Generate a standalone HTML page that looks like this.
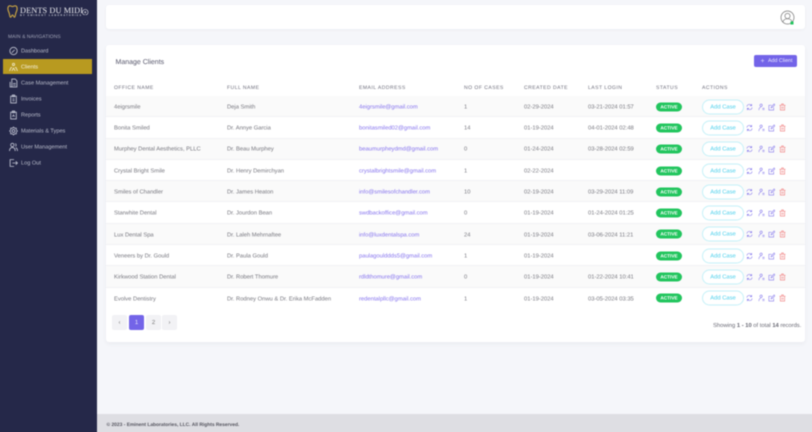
<!DOCTYPE html>
<html><head><meta charset="utf-8">
<style>
*{box-sizing:border-box;margin:0;padding:0}
html{background:#f5f6fa}
html,body{width:812px;height:432px;overflow:hidden;font-family:"Liberation Sans",sans-serif;color:#6a6a78;text-rendering:geometricPrecision}
#w{position:absolute;left:0;top:0;width:812px;height:432px;overflow:hidden;background:#f5f6fa}
#f{position:absolute;left:0;top:0;width:812px;height:432px;filter:blur(.4px)}
.a{position:absolute;white-space:nowrap}
#side{left:-3px;top:-3px;width:100px;height:440px;background:#252849}
.nav{position:absolute;left:21px;font-size:5.6px;line-height:1;color:#b9bccb;white-space:nowrap;transform:translateY(calc(-50% + 1.2px))}
.ni{position:absolute;left:9px;width:9px;height:9px;transform:translateY(-50%);fill:none;stroke:#c0c3d2;stroke-width:1.5}
#hdr{left:106px;top:5px;width:699px;height:24px;background:#fff;border-radius:3px;box-shadow:0 1px 3px rgba(30,30,60,.04)}
#card{left:106px;top:45px;width:699px;height:297px;background:#fff;border-radius:3px;box-shadow:0 2px 5px rgba(30,30,60,.05)}
.th{position:absolute;top:84.700px;line-height:6px;font-size:5.1px;letter-spacing:.45px;color:#70707e;white-space:nowrap}
.r{position:absolute;left:106px;width:699px;height:21.3px;border-bottom:1px solid #f1f1f4}
.r.o{background:#fafafa}
.c{position:absolute;font-size:5.8px;color:#77777f;white-space:nowrap;line-height:1;transform:translateY(calc(-50% + 1.2px))}
.m{color:#8674ee}
.st{position:absolute;left:656px;width:26px;height:9px;border-radius:5px;background:#22c55e;color:#fff;font-size:4.7px;font-weight:bold;line-height:9px;text-align:center;transform:translateY(-50%)}
.ac{position:absolute;left:702px;width:42px;height:15px;border-radius:8px;border:1px solid #c5f1f8;background:#fff;color:#4ed0ec;font-size:5.8px;line-height:14.500px;text-align:center;transform:translateY(-50%)}
.ic{position:absolute;width:7px;height:8px;transform:translateY(-50%);fill:none;stroke-width:1.3}
.pg{position:absolute;top:315px;width:15px;height:15px;border-radius:2px;background:#f2f2f5;color:#777;font-size:6px;line-height:16.500px;text-align:center}
</style></head><body><div id="w"><div id="f">
<div class="a" id="side"></div>
<svg class="a" style="left:7px;top:5px" width="11" height="13" viewBox="0 0 14 17" fill="none" stroke="#c9a443" stroke-width="1.5"><path d="M3.5 1C1.500 1 1 3 1 5c0 3 1.500 4 2 7 .3 2 .6 4 1.500 4S6 13 7 13s1.600 3 2.500 3 1.200-2 1.500-4c.5-3 2-4 2-7 0-2-.5-4-2.500-4C9 1 8.500 2 7 2S5 1 3.500 1z"/></svg>
<div class="a" style="left:20px;top:5.800px;font:8.300px/10px 'Liberation Serif',serif;letter-spacing:.1px;color:#ececf0">DENTS DU MIDI</div>
<div class="a" style="left:20px;top:14px;font:bold 2.500px/3px 'Liberation Sans',sans-serif;letter-spacing:1.150px;color:#c5c7d2">BY EMINENT LABORATORIES</div>
<svg class="a" style="left:82px;top:8.500px" width="6.500" height="6.500" viewBox="0 0 7 7" fill="none" stroke="#d5d5dd" stroke-width=".7"><circle cx="3.500" cy="3.500" r="3"/><circle cx="3.500" cy="3.500" r=".7"/></svg>
<div class="a" style="left:8px;top:35px;font-size:4.900px;line-height:5px;color:#a2a5b8;letter-spacing:.1px">MAIN &amp; NAVIGATIONS</div>
<div class="a" style="left:3px;top:59px;width:89px;height:15px;background:#b89a20"></div>
<svg class="ni" style="top:50.500px" viewBox="0 0 16 16"><circle cx="8" cy="8" r="6.500"/><path d="M5 11l5-5"/></svg>
<div class="nav" style="top:50.500px">Dashboard</div>
<svg class="ni" style="top:66.500px;stroke:#f0e8c5" viewBox="0 0 16 16"><circle cx="8" cy="3.500" r="2"/><path d="M1 15l2.500-6h2M15 15l-2.500-6h-2M5 15l3-5 3 5"/></svg>
<div class="nav" style="top:66.500px;color:#f5f1dc">Clients</div>
<svg class="ni" style="top:82.500px" viewBox="0 0 16 16"><path d="M5 1h6l3 3v11H5zM2 6v9h3M7 9h5M7 12h5"/></svg>
<div class="nav" style="top:82.500px">Case Management</div>
<svg class="ni" style="top:98.500px" viewBox="0 0 16 16"><path d="M3 3h10v12H3zM6 1h4v3H6zM6 8h4M6 11h4"/></svg>
<div class="nav" style="top:98.500px">Invoices</div>
<svg class="ni" style="top:114.500px" viewBox="0 0 16 16"><path d="M3 3h10v12H3zM6 1h4v3H6zM6 11l2-3 2 3"/></svg>
<div class="nav" style="top:114.500px">Reports</div>
<svg class="ni" style="top:130.500px" viewBox="0 0 16 16"><path d="M8 1l2 2h3v3l2 2-2 2v3h-3l-2 2-2-2H3v-3L1 8l2-2V3h3z"/><circle cx="8" cy="8" r="2.500"/></svg>
<div class="nav" style="top:130.500px">Materials &amp; Types</div>
<svg class="ni" style="top:146.500px" viewBox="0 0 16 16"><circle cx="6" cy="4.500" r="3"/><path d="M1 15c0-4 2-6 5-6s5 2 5 6M11 2c2 .5 2.500 4 .5 5M12 9.500c2 .5 3 2.500 3 5.500"/></svg>
<div class="nav" style="top:146.500px">User Management</div>
<svg class="ni" style="top:162.500px" viewBox="0 0 16 16"><path d="M9 2H2v12h7M6 8h9M12 5l3 3-3 3"/></svg>
<div class="nav" style="top:162.500px">Log Out</div>

<div class="a" id="hdr"></div>
<svg class="a" style="left:779.500px;top:9.500px" width="15" height="15" viewBox="0 0 15 15" fill="none" stroke="#777" stroke-width=".7"><circle cx="7.500" cy="7.500" r="6.500"/><circle cx="7.500" cy="6" r="2.600"/><path d="M2.800 12c.7-2.300 2.500-3.200 4.700-3.200s4 .9 4.700 3.200"/><rect x="10.500" y="11.500" width="3" height="3" fill="#22c55e" stroke="none"/></svg>

<div class="a" id="card"></div>
<div class="a" style="left:115.500px;top:58.500px;font-size:7px;line-height:8px;color:#55556a">Manage Clients</div>
<div class="a" style="left:754px;top:55px;width:43px;height:12px;border-radius:2px;background:#7364e8;color:#e8e5ff;font-size:5.300px;line-height:13.500px;padding-left:14px">Add Client</div>
<div class="a" style="left:760.500px;top:59px;color:#dcd8ff;font-size:7px;line-height:5px">+</div>

<div class="th" style="left:114px">OFFICE NAME</div>
<div class="th" style="left:227px">FULL NAME</div>
<div class="th" style="left:359px">EMAIL ADDRESS</div>
<div class="th" style="left:464px">NO OF CASES</div>
<div class="th" style="left:524px">CREATED DATE</div>
<div class="th" style="left:588px">LAST LOGIN</div>
<div class="th" style="left:656px">STATUS</div>
<div class="th" style="left:702px">ACTIONS</div>

<div class="r o" style="top:96px"></div><div class="r" style="top:117.300px"></div><div class="r o" style="top:138.600px"></div><div class="r" style="top:159.900px"></div><div class="r o" style="top:181.200px"></div><div class="r" style="top:202.500px"></div><div class="r o" style="top:223.800px"></div><div class="r" style="top:245.100px"></div><div class="r o" style="top:266.400px"></div><div class="r" style="top:287.700px;border-bottom:0"></div>

<div class="c" style="left:114px;top:106.800px">4eigrsmile</div><div class="c" style="left:227px;top:106.800px">Deja Smith</div><div class="c m" style="left:359px;top:106.800px">4eigrsmile@gmail.com</div><div class="c" style="left:464px;top:106.800px">1</div><div class="c" style="left:524px;top:106.800px">02-29-2024</div><div class="c" style="left:588px;top:106.800px">03-21-2024 01:57</div>
<div class="c" style="left:114px;top:128.100px">Bonita Smiled</div><div class="c" style="left:227px;top:128.100px">Dr. Annye Garcia</div><div class="c m" style="left:359px;top:128.100px">bonitasmiled02@gmail.com</div><div class="c" style="left:464px;top:128.100px">14</div><div class="c" style="left:524px;top:128.100px">01-19-2024</div><div class="c" style="left:588px;top:128.100px">04-01-2024 02:48</div>
<div class="c" style="left:114px;top:149.400px">Murphey Dental Aesthetics, PLLC</div><div class="c" style="left:227px;top:149.400px">Dr. Beau Murphey</div><div class="c m" style="left:359px;top:149.400px">beaumurpheydmd@gmail.com</div><div class="c" style="left:464px;top:149.400px">0</div><div class="c" style="left:524px;top:149.400px">01-24-2024</div><div class="c" style="left:588px;top:149.400px">03-28-2024 02:59</div>
<div class="c" style="left:114px;top:170.700px">Crystal Bright Smile</div><div class="c" style="left:227px;top:170.700px">Dr. Henry Demirchyan</div><div class="c m" style="left:359px;top:170.700px">crystalbrightsmile@gmail.com</div><div class="c" style="left:464px;top:170.700px">1</div><div class="c" style="left:524px;top:170.700px">02-22-2024</div>
<div class="c" style="left:114px;top:192px">Smiles of Chandler</div><div class="c" style="left:227px;top:192px">Dr. James Heaton</div><div class="c m" style="left:359px;top:192px">info@smilesofchandler.com</div><div class="c" style="left:464px;top:192px">10</div><div class="c" style="left:524px;top:192px">02-19-2024</div><div class="c" style="left:588px;top:192px">03-29-2024 11:09</div>
<div class="c" style="left:114px;top:213.300px">Starwhite Dental</div><div class="c" style="left:227px;top:213.300px">Dr. Jourdon Bean</div><div class="c m" style="left:359px;top:213.300px">swdbackoffice@gmail.com</div><div class="c" style="left:464px;top:213.300px">0</div><div class="c" style="left:524px;top:213.300px">01-19-2024</div><div class="c" style="left:588px;top:213.300px">01-24-2024 01:25</div>
<div class="c" style="left:114px;top:234.600px">Lux Dental Spa</div><div class="c" style="left:227px;top:234.600px">Dr. Laleh Mehrnaftee</div><div class="c m" style="left:359px;top:234.600px">info@luxdentalspa.com</div><div class="c" style="left:464px;top:234.600px">24</div><div class="c" style="left:524px;top:234.600px">01-19-2024</div><div class="c" style="left:588px;top:234.600px">03-06-2024 11:21</div>
<div class="c" style="left:114px;top:255.900px">Veneers by Dr. Gould</div><div class="c" style="left:227px;top:255.900px">Dr. Paula Gould</div><div class="c m" style="left:359px;top:255.900px">paulagoulddds5@gmail.com</div><div class="c" style="left:464px;top:255.900px">1</div><div class="c" style="left:524px;top:255.900px">01-19-2024</div>
<div class="c" style="left:114px;top:277.200px">Kirkwood Station Dental</div><div class="c" style="left:227px;top:277.200px">Dr. Robert Thomure</div><div class="c m" style="left:359px;top:277.200px">rdldthomure@gmail.com</div><div class="c" style="left:464px;top:277.200px">0</div><div class="c" style="left:524px;top:277.200px">01-19-2024</div><div class="c" style="left:588px;top:277.200px">01-22-2024 10:41</div>
<div class="c" style="left:114px;top:298.500px">Evolve Dentistry</div><div class="c" style="left:227px;top:298.500px">Dr. Rodney Onwu &amp; Dr. Erika McFadden</div><div class="c m" style="left:359px;top:298.500px">redentalpllc@gmail.com</div><div class="c" style="left:464px;top:298.500px">1</div><div class="c" style="left:524px;top:298.500px">01-19-2024</div><div class="c" style="left:588px;top:298.500px">03-05-2024 03:35</div>

<svg width="0" height="0" style="position:absolute"><defs>
<symbol id="i1" viewBox="0 0 16 16"><path d="M2 7c.5-3 3-5 6-5 2 0 3.500 1 4.500 2.500M14 9c-.5 3-3 5-6 5-2 0-3.500-1-4.500-2.500M13 1v4H9M3 15v-4h4"/></symbol>
<symbol id="i2" viewBox="0 0 16 16"><circle cx="7" cy="4" r="2.700"/><path d="M2 15c0-4 2-6.500 5-6.500M10 11h5M10 14h5"/></symbol>
<symbol id="i3" viewBox="0 0 16 16"><path d="M13 9v6H2V4h6M7 10l1-3 6-6 2 2-6 6z"/></symbol>
<symbol id="i4" viewBox="0 0 16 16"><path d="M3 4h10v11H3zM1 4h14M6 4V1h4v3M6.500 7v5M9.500 7v5"/></symbol>
</defs></svg>

<div class="st" style="top:106.600px">ACTIVE</div><div class="ac" style="top:106.600px">Add Case</div>
<svg class="ic" style="left:746px;top:106.600px;stroke:#8578ec"><use href="#i1"/></svg><svg class="ic" style="left:757.500px;top:106.600px;stroke:#8578ec"><use href="#i2"/></svg><svg class="ic" style="left:768px;top:106.600px;stroke:#8578ec"><use href="#i3"/></svg><svg class="ic" style="left:778.500px;top:106.600px;stroke:#ef7b7b"><use href="#i4"/></svg>
<div class="st" style="top:127.900px">ACTIVE</div><div class="ac" style="top:127.900px">Add Case</div>
<svg class="ic" style="left:746px;top:127.900px;stroke:#8578ec"><use href="#i1"/></svg><svg class="ic" style="left:757.500px;top:127.900px;stroke:#8578ec"><use href="#i2"/></svg><svg class="ic" style="left:768px;top:127.900px;stroke:#8578ec"><use href="#i3"/></svg><svg class="ic" style="left:778.500px;top:127.900px;stroke:#ef7b7b"><use href="#i4"/></svg>
<div class="st" style="top:149.200px">ACTIVE</div><div class="ac" style="top:149.200px">Add Case</div>
<svg class="ic" style="left:746px;top:149.200px;stroke:#8578ec"><use href="#i1"/></svg><svg class="ic" style="left:757.500px;top:149.200px;stroke:#8578ec"><use href="#i2"/></svg><svg class="ic" style="left:768px;top:149.200px;stroke:#8578ec"><use href="#i3"/></svg><svg class="ic" style="left:778.500px;top:149.200px;stroke:#ef7b7b"><use href="#i4"/></svg>
<div class="st" style="top:170.500px">ACTIVE</div><div class="ac" style="top:170.500px">Add Case</div>
<svg class="ic" style="left:746px;top:170.500px;stroke:#8578ec"><use href="#i1"/></svg><svg class="ic" style="left:757.500px;top:170.500px;stroke:#8578ec"><use href="#i2"/></svg><svg class="ic" style="left:768px;top:170.500px;stroke:#8578ec"><use href="#i3"/></svg><svg class="ic" style="left:778.500px;top:170.500px;stroke:#ef7b7b"><use href="#i4"/></svg>
<div class="st" style="top:191.800px">ACTIVE</div><div class="ac" style="top:191.800px">Add Case</div>
<svg class="ic" style="left:746px;top:191.800px;stroke:#8578ec"><use href="#i1"/></svg><svg class="ic" style="left:757.500px;top:191.800px;stroke:#8578ec"><use href="#i2"/></svg><svg class="ic" style="left:768px;top:191.800px;stroke:#8578ec"><use href="#i3"/></svg><svg class="ic" style="left:778.500px;top:191.800px;stroke:#ef7b7b"><use href="#i4"/></svg>
<div class="st" style="top:213.100px">ACTIVE</div><div class="ac" style="top:213.100px">Add Case</div>
<svg class="ic" style="left:746px;top:213.100px;stroke:#8578ec"><use href="#i1"/></svg><svg class="ic" style="left:757.500px;top:213.100px;stroke:#8578ec"><use href="#i2"/></svg><svg class="ic" style="left:768px;top:213.100px;stroke:#8578ec"><use href="#i3"/></svg><svg class="ic" style="left:778.500px;top:213.100px;stroke:#ef7b7b"><use href="#i4"/></svg>
<div class="st" style="top:234.400px">ACTIVE</div><div class="ac" style="top:234.400px">Add Case</div>
<svg class="ic" style="left:746px;top:234.400px;stroke:#8578ec"><use href="#i1"/></svg><svg class="ic" style="left:757.500px;top:234.400px;stroke:#8578ec"><use href="#i2"/></svg><svg class="ic" style="left:768px;top:234.400px;stroke:#8578ec"><use href="#i3"/></svg><svg class="ic" style="left:778.500px;top:234.400px;stroke:#ef7b7b"><use href="#i4"/></svg>
<div class="st" style="top:255.700px">ACTIVE</div><div class="ac" style="top:255.700px">Add Case</div>
<svg class="ic" style="left:746px;top:255.700px;stroke:#8578ec"><use href="#i1"/></svg><svg class="ic" style="left:757.500px;top:255.700px;stroke:#8578ec"><use href="#i2"/></svg><svg class="ic" style="left:768px;top:255.700px;stroke:#8578ec"><use href="#i3"/></svg><svg class="ic" style="left:778.500px;top:255.700px;stroke:#ef7b7b"><use href="#i4"/></svg>
<div class="st" style="top:277px">ACTIVE</div><div class="ac" style="top:277px">Add Case</div>
<svg class="ic" style="left:746px;top:277px;stroke:#8578ec"><use href="#i1"/></svg><svg class="ic" style="left:757.500px;top:277px;stroke:#8578ec"><use href="#i2"/></svg><svg class="ic" style="left:768px;top:277px;stroke:#8578ec"><use href="#i3"/></svg><svg class="ic" style="left:778.500px;top:277px;stroke:#ef7b7b"><use href="#i4"/></svg>
<div class="st" style="top:298.300px">ACTIVE</div><div class="ac" style="top:298.300px">Add Case</div>
<svg class="ic" style="left:746px;top:298.300px;stroke:#8578ec"><use href="#i1"/></svg><svg class="ic" style="left:757.500px;top:298.300px;stroke:#8578ec"><use href="#i2"/></svg><svg class="ic" style="left:768px;top:298.300px;stroke:#8578ec"><use href="#i3"/></svg><svg class="ic" style="left:778.500px;top:298.300px;stroke:#ef7b7b"><use href="#i4"/></svg>

<div class="pg" style="left:112px">‹</div>
<div class="pg" style="left:129px;background:#7364e8;color:#e8e5ff">1</div>
<div class="pg" style="left:146px">2</div>
<div class="pg" style="left:162px">›</div>
<div class="a" style="left:713px;top:323px;font-size:5.800px;line-height:7px;color:#6a6a75">Showing <b>1 - 10</b> of total <b>14</b> records.</div>

<div class="a" style="left:97px;top:414px;width:718px;height:21px;background:#dedee3"></div>
<div class="a" style="left:106.500px;top:422px;font-size:4.900px;line-height:7px;color:#55555f;font-weight:bold">© 2023 - Eminent Laboratories, LLC. All Rights Reserved.</div>
</div></div></body></html>
